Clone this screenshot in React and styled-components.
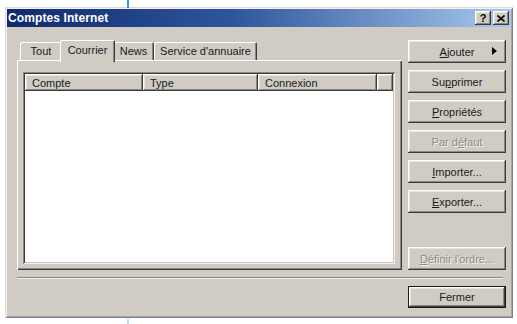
import React from 'react'
import styled, { createGlobalStyle, css } from 'styled-components'

const GlobalStyle = createGlobalStyle`
  html, body {
    margin: 0;
    background: #ffffff;
  }
  body {
    font-family: 'Liberation Sans', Arial, sans-serif;
    font-size: 11px;
    color: #1a1a1a;
  }
`

const face = '#d0ccc4'

const raised = css`
  box-shadow: inset -1px -1px #3c3c3c, inset 1px 1px #ffffff,
    inset -2px -2px #8a8882, inset 2px 2px #e6e3dc;
`

const Page = styled.div`
  position: relative;
  width: 517px;
  height: 324px;
  padding: 7px 0 0 5px;
  box-sizing: border-box;
  overflow: hidden;
`

const Marker = styled.div`
  position: absolute;
  left: 127px;
  width: 2px;
  background: #3f94d8;
  top: ${(p) => (p.$bottom ? '319px' : '0')};
  height: ${(p) => (p.$bottom ? '5px' : '8px')};
  opacity: ${(p) => (p.$bottom ? 0.35 : 1)};
`

const Window = styled.div`
  width: 508px;
  height: 311px;
  background: ${face};
  box-sizing: border-box;
  box-shadow: inset 1px 1px #dcd9d2, inset -1px -1px #7c7b94,
    inset 2px 2px #f4f2ee, inset -2px -2px #a4a2ac;
  display: flex;
  flex-direction: column;
`

const TitleBar = styled.div`
  height: 18px;
  margin: 2px 2px 0;
  background: linear-gradient(to right, #0f2a6c 0%, #2f569c 45%, #a9c9ee 100%);
  display: flex;
  align-items: center;
  justify-content: space-between;
  padding: 0 2px 0 1px;
`

const Title = styled.span`
  color: #ffffff;
  font-weight: bold;
  font-size: 12px;
  letter-spacing: 0.1px;
`

const CaptionGroup = styled.div`
  display: flex;
  gap: 2px;
`

const CaptionButton = styled.div`
  width: 16px;
  height: 14px;
  background: ${face};
  ${raised};
  display: flex;
  align-items: center;
  justify-content: center;
  font-weight: bold;
  font-size: 11px;
  color: #000;
`

const Body = styled.div`
  display: flex;
  padding: 13px 0 0 12px;
`

const LeftCol = styled.div`
  width: 385px;
  display: flex;
  flex-direction: column;
`

const TabRow = styled.div`
  height: 22px;
  margin-bottom: -2px;
  padding-left: 3px;
  display: flex;
  align-items: flex-start;
  position: relative;
  z-index: 1;
`

const Tab = styled.div`
  box-sizing: border-box;
  width: ${(p) => p.$w}px;
  display: flex;
  align-items: center;
  justify-content: center;
  background: ${face};
  border-radius: 2px 2px 0 0;
  box-shadow: inset 1px 1px #ffffff, inset -1px 0 #3c3c3c, inset -2px 0 #8a8882;
  height: ${(p) => (p.$active ? '22px' : '18px')};
  margin-top: ${(p) => (p.$active ? '0' : '2px')};
  margin-left: ${(p) => (p.$active ? '-2px' : '0')};
  margin-right: ${(p) => (p.$active ? '-2px' : '0')};
  padding-bottom: ${(p) => (p.$active ? '3px' : '0')};
  position: relative;
  z-index: ${(p) => (p.$active ? 2 : 1)};
  ${(p) =>
    p.$dim &&
    css`
      box-shadow: inset 1px 1px #ffffff;
    `}
`

const Panel = styled.div`
  height: 210px;
  box-sizing: border-box;
  padding: 12px 7px 6px 6px;
  box-shadow: inset 1px 1px #ffffff, inset -1px -1px #3c3c3c,
    inset -2px -2px #8a8882;
  display: flex;
`

const ListView = styled.div`
  flex: 1;
  background: #ffffff;
  padding: 2px;
  box-shadow: inset 1px 1px #8a8882, inset -1px -1px #f4f2ee,
    inset 2px 2px #3c3c3c, inset -2px -2px #c8c4bc;
`

const Header = styled.div`
  display: flex;
  height: 17px;
`

const HeaderCell = styled.div`
  box-sizing: border-box;
  width: ${(p) => (p.$w ? `${p.$w}px` : 'auto')};
  flex: ${(p) => (p.$w ? 'none' : '1')};
  background: ${face};
  ${raised};
  padding-left: 7px;
  display: flex;
  align-items: center;
`

const ButtonCol = styled.div`
  width: 98px;
  margin-left: 6px;
  height: 230px;
  display: flex;
  flex-direction: column;
  gap: 7px;
`

const Button = styled.div`
  position: relative;
  height: 23px;
  box-sizing: border-box;
  background: ${face};
  ${raised};
  display: flex;
  align-items: center;
  justify-content: center;
  color: ${(p) => (p.$disabled ? '#8e8c86' : '#1a1a1a')};
  text-shadow: ${(p) => (p.$disabled ? '1px 1px #f4f2ee' : 'none')};
  margin-top: ${(p) => (p.$push ? 'auto' : '0')};
  ${(p) =>
    p.$default &&
    css`
      border: 1px solid #1a1a1a;
      height: 22px;
    `}

  u {
    text-decoration-thickness: 1px;
    text-underline-offset: 1px;
  }
`

const Arrow = styled.svg`
  position: absolute;
  right: 9px;
  top: 7px;
`

const Separator = styled.div`
  margin: 7px 10px 0 12px;
  height: 1px;
  background: #8a8882;
  border-bottom: 1px solid #f4f2ee;
`

const Footer = styled.div`
  display: flex;
  justify-content: flex-end;
  padding: 7px 7px 0 0;
`

const FooterButton = styled(Button)`
  width: 98px;
`

const tabs = [
  { label: 'Tout', w: 42, dim: true },
  { label: 'Courrier', w: 55, active: true },
  { label: 'News', w: 41 },
  { label: "Service d'annuaire", w: 103 },
]

const columns = [
  { label: 'Compte', w: 118 },
  { label: 'Type', w: 115 },
  { label: 'Connexion', w: 119 },
  { label: '' },
]

export default function App() {
  return (
    <Page>
      <GlobalStyle />
      <Marker />
      <Window>
        <TitleBar>
          <Title>Comptes Internet</Title>
          <CaptionGroup>
            <CaptionButton>?</CaptionButton>
            <CaptionButton>
              <svg width="8" height="7" viewBox="0 0 8 7">
                <path d="M0.5 0.5 L7.5 6.5 M7.5 0.5 L0.5 6.5" stroke="#000" strokeWidth="1.6" />
              </svg>
            </CaptionButton>
          </CaptionGroup>
        </TitleBar>

        <Body>
          <LeftCol>
            <TabRow>
              {tabs.map((t) => (
                <Tab key={t.label} $w={t.w} $active={t.active} $dim={t.dim}>
                  {t.label}
                </Tab>
              ))}
            </TabRow>
            <Panel>
              <ListView>
                <Header>
                  {columns.map((c, i) => (
                    <HeaderCell key={i} $w={c.w}>
                      {c.label}
                    </HeaderCell>
                  ))}
                </Header>
              </ListView>
            </Panel>
          </LeftCol>

          <ButtonCol>
            <Button>
              <span>
                <u>A</u>jouter
              </span>
              <Arrow width="5" height="8" viewBox="0 0 5 8">
                <path d="M0 0 L5 4 L0 8 Z" fill="#000" />
              </Arrow>
            </Button>
            <Button>
              <span>
                Su<u>p</u>primer
              </span>
            </Button>
            <Button>
              <span>
                <u>P</u>ropriétés
              </span>
            </Button>
            <Button $disabled>
              <span>
                Par d<u>é</u>faut
              </span>
            </Button>
            <Button>
              <span>
                <u>I</u>mporter...
              </span>
            </Button>
            <Button>
              <span>
                <u>E</u>xporter...
              </span>
            </Button>
            <Button $disabled $push>
              <span>
                <u>D</u>éfinir l'ordre...
              </span>
            </Button>
          </ButtonCol>
        </Body>

        <Separator />
        <Footer>
          <FooterButton $default>Fermer</FooterButton>
        </Footer>
      </Window>
      <Marker $bottom />
    </Page>
  )
}
